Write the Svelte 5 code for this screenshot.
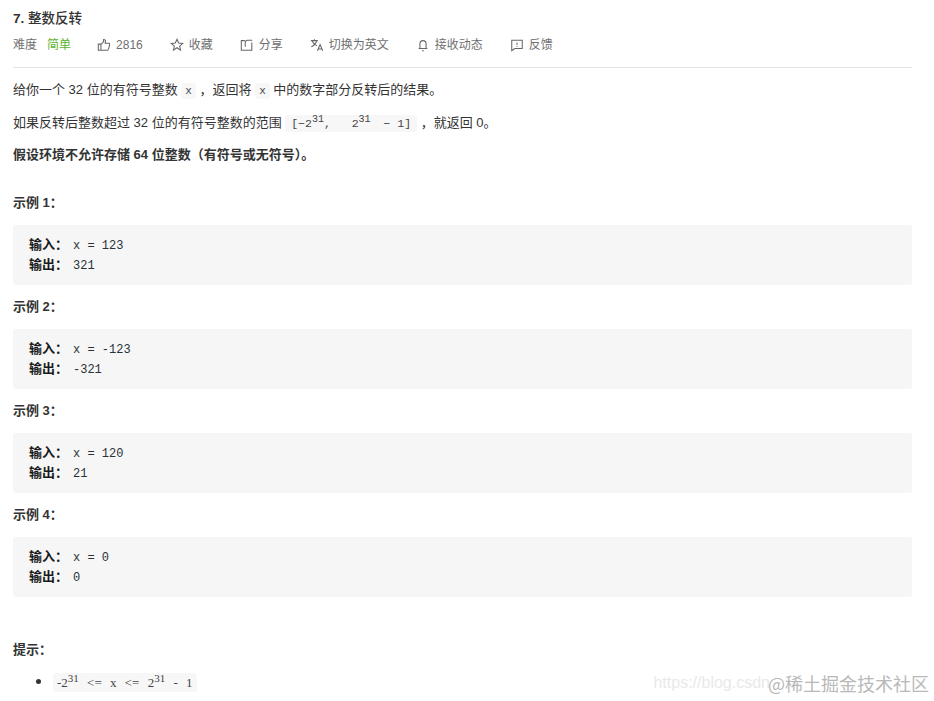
<script>
	const examples = [
		{ input: 'x = 123', output: '321' },
		{ input: 'x = -123', output: '-321' },
		{ input: 'x = 120', output: '21' },
		{ input: 'x = 0', output: '0' }
	];
</script>

<div class="page">
	<h1><b>7.</b> 整数反转</h1>

	<div class="meta">
		<span class="difficulty">难度</span>
		<span class="easy">简单</span>
		<span class="action likes">
			<svg viewBox="0 0 16 16"><path d="M1.500 7h3v7h-3zM4.500 7.500l3-3.500V1.800c1.200-.4 2.200.5 2.200 1.700L9.300 6h4c.8 0 1.300.7 1.100 1.500l-1.200 5.300c-.2.7-.7 1.200-1.400 1.200H4.500"/></svg>
			2816
		</span>
		<span class="action">
			<svg viewBox="0 0 16 16"><path d="M8 1.500l1.900 4.200 4.600.5-3.400 3.100.9 4.500L8 11.100l-4 2.700.9-4.500-3.400-3.100 4.600-.5z"/></svg>
			收藏
		</span>
		<span class="action">
			<svg viewBox="0 0 16 16"><path d="M5.500 3H1.500v11h12V5M6 10V5c0-1.500 1-2.500 2.500-2.500H14"/></svg>
			分享
		</span>
		<span class="action">
			<svg viewBox="0 0 16 16"><path d="M1 3h8M5 1.500V3M7.500 3C7 6 4.500 8.500 1.500 10M2.500 3.500C3.500 6 5.500 8 8 9M8.500 14.500l3-7 3 7M9.600 12.500h3.800"/></svg>
			切换为英文
		</span>
		<span class="action">
			<svg viewBox="0 0 16 16"><path d="M4.500 12V6.500a3.500 3.500 0 0 1 7 0V12zM3 12h10M7 14.500h2"/></svg>
			接收动态
		</span>
		<span class="action">
			<svg viewBox="0 0 16 16"><path d="M2 2.500h12v9.500H5.500L2 14.500zM8 5v3M8 9.300v1"/></svg>
			反馈
		</span>
	</div>

	<div class="content">
		<p>给你一个 32 位的有符号整数 <code>x</code> ，返回将 <code>x</code> 中的数字部分反转后的结果。</p>
		<p>如果反转后整数超过 32 位的有符号整数的范围 <code class="range">[−2<sup>31</sup>,&nbsp;&nbsp;&nbsp;2<sup>31&nbsp;</sup>&nbsp;− 1]</code> ，就返回 0。</p>
		<p><strong>假设环境不允许存储 64 位整数（有符号或无符号）。</strong></p>

		<div class="examples">
			{#each examples as example, i}
				<p class="example-title"><strong>示例 {i + 1}：</strong></p>
				<pre><strong>输入：</strong>{example.input}
<strong>输出：</strong>{example.output}</pre>
			{/each}
		</div>

		<p class="hint-title"><strong>提示：</strong></p>
		<ul>
			<li><code class="serif">-2<sup>31</sup> &lt;= x &lt;= 2<sup>31</sup> - 1</code></li>
		</ul>
	</div>

	<div class="watermark">
		<span class="csdn">https://blog.csdn</span>
		<span class="juejin">@稀土掘金技术社区</span>
	</div>
</div>

<style>
	:global(body) {
		background: #fff;
	}

	.page {
		position: relative;
		height: 701px;
		overflow: hidden;
		padding: 10px 22px 0 13px;
		font-family: "Liberation Sans", "Noto Sans CJK SC", sans-serif;
		font-size: 13px;
		line-height: 18px;
		color: #333;
	}

	h1 {
		margin: 0;
		font-size: 13.500px;
		font-weight: 500;
		line-height: 18px;
	}

	.meta {
		display: flex;
		align-items: center;
		height: 18px;
		margin-top: 8px;
		padding-bottom: 13px;
		border-bottom: 1px solid #e4e4e4;
		font-size: 12px;
		color: #6f6f6f;
	}

	.easy {
		margin-left: 10px;
		color: #5cb32e;
	}

	.action {
		display: flex;
		align-items: center;
		gap: 5px;
		margin-left: 27px;
	}

	.likes { margin-left: 26px; }

	.action svg {
		width: 14px;
		height: 14px;
		fill: none;
		stroke: #666;
		stroke-width: 1.2;
	}

	.content {
		padding-top: 13px;
	}

	p {
		margin: 0 0 14.500px;
		height: 18px;
	}

	code {
		padding: 2px 4px;
		border-radius: 3px;
		background: #f7f7f7;
		font-family: "Liberation Mono", monospace;
		font-size: 11px;
		line-height: 14px;
		color: #444;
	}

	code.range {
		padding: 2px 6px;
		font-size: 11.500px;
	}

	code.serif {
		padding: 2px 4px;
		font-family: "Liberation Serif", serif;
		font-size: 13px;
		word-spacing: 5px;
	}

	sup {
		font-size: 10px;
		line-height: 0;
	}

	code.serif sup {
		font-size: 11px;
	}

	.examples {
		margin-top: 30px;
	}

	.example-title {
		margin: 0;
	}

	pre {
		margin: 13px 0;
		padding: 11px 16px 9px;
		height: 40px;
		line-height: 20px;
		border-radius: 3px;
		background: #f6f6f6;
		font-family: "Liberation Mono", "Noto Sans CJK SC", monospace;
		font-size: 12px;
		color: #263238;
	}

	pre strong {
		margin-right: 5px;
		font-size: 13px;
		color: #1a1a1a;
	}

	.hint-title {
		margin-top: 44px;
		margin-bottom: 13px;
	}

	ul {
		margin: 0;
		padding-left: 40px;
		list-style: disc;
	}

	li {
		height: 18px;
		line-height: 20px;
	}

	li::marker {
		font-size: 17px;
	}

	.watermark {
		position: absolute;
		right: 5px;
		bottom: 16px;
		display: flex;
		align-items: center;
		height: 24px;
		white-space: nowrap;
		pointer-events: none;
	}

	.csdn {
		font-size: 16px;
		color: #e9e9e9;
		margin-right: -2px;
	}

	.juejin {
		font-family: "Noto Sans CJK SC", sans-serif;
		font-size: 18px;
		line-height: 24px;
		color: #a8a8a8;
		opacity: 0.8;
	}
</style>
